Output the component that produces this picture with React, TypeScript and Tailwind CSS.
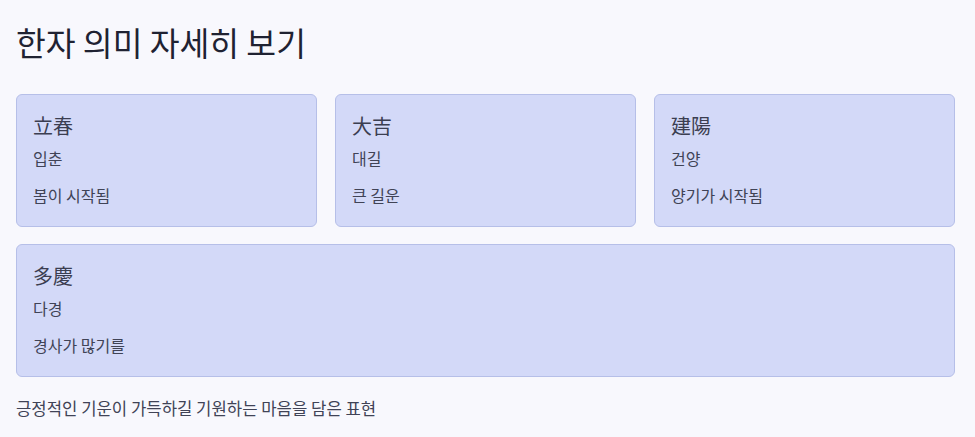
import React from 'react';

interface Word {
  hanja: string;
  reading: string;
  meaning: string;
}

const words: Word[] = [
  { hanja: '立春', reading: '입춘', meaning: '봄이 시작됨' },
  { hanja: '大吉', reading: '대길', meaning: '큰 길운' },
  { hanja: '建陽', reading: '건양', meaning: '양기가 시작됨' },
  { hanja: '多慶', reading: '다경', meaning: '경사가 많기를' },
];

const WordCard: React.FC<{ word: Word; wide?: boolean }> = ({ word, wide }) => (
  <div
    className={`rounded-md border border-[#b6bfe8] bg-[#d3d9f8] px-4 pt-[17px] pb-[19px] ${
      wide ? 'col-span-3' : ''
    }`}
  >
    <div className="text-xl leading-7 text-[#3b3e51]">{word.hanja}</div>
    <div className="mt-[6px] text-base leading-6 text-[#404356]">{word.reading}</div>
    <div className="mt-[13px] text-base leading-6 text-[#404356]">{word.meaning}</div>
  </div>
);

export default function App() {
  return (
    <div
      className="min-h-screen bg-[#f8f8fd] px-4 pt-[22px] pb-4"
      style={{ fontFamily: '"Noto Sans CJK KR", "Noto Sans", sans-serif' }}
    >
      <h1 className="mb-8 text-[32.4px] leading-10 text-[#1f2232]">한자 의미 자세히 보기</h1>
      <div className="grid w-[939px] grid-cols-3 gap-x-[18px] gap-y-[17px]">
        {words.map((w, i) => (
          <WordCard key={w.hanja} word={w} wide={i === 3} />
        ))}
      </div>
      <p className="mt-[19px] text-[16.7px] leading-6 text-[#404356]">
        긍정적인 기운이 가득하길 기원하는 마음을 담은 표현
      </p>
    </div>
  );
}
